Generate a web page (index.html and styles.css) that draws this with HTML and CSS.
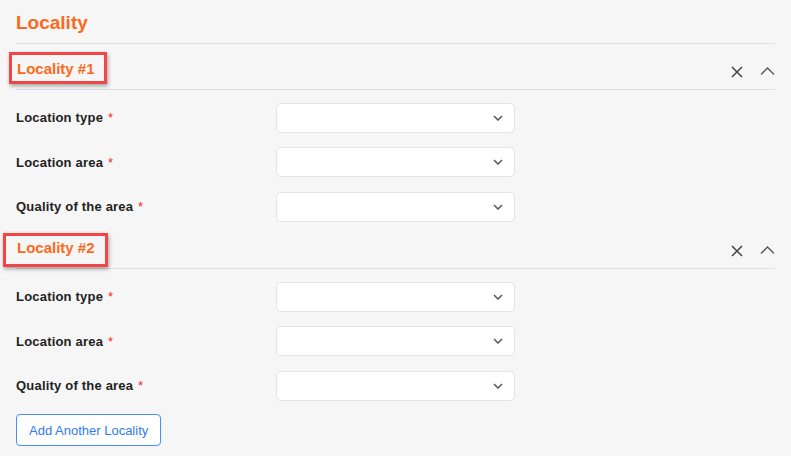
FILE: index.html
```html
<!DOCTYPE html>
<html>
<head>
<meta charset="utf-8">
<link rel="stylesheet" href="styles.css">
</head>
<body>
<div class="page">
  <div class="title">Locality</div>

  <div class="section">
    <div class="section-header">
      <div class="mark mark-1"></div>
      <div class="section-title">Locality #1</div>
      <div class="actions">
        <svg class="icon-x" width="12" height="12" viewBox="0 0 12 12"><path d="M1 1 L11 11 M11 1 L1 11" stroke="#444" stroke-width="1.5" fill="none"/></svg>
        <svg class="icon-up" width="15" height="8" viewBox="0 0 15 8"><path d="M1 7.5 L7.5 1 L14 7.5" stroke="#555" stroke-width="1.3" fill="none"/></svg>
      </div>
    </div>
    <div class="rows">
      <div class="row"><div class="label">Location type <span class="req">*</span></div><div class="select"><svg width="10" height="6" viewBox="0 0 10 6"><path d="M1 1 L5 5 L9 1" stroke="#555" stroke-width="1.5" fill="none"/></svg></div></div>
      <div class="row"><div class="label">Location area <span class="req">*</span></div><div class="select"><svg width="10" height="6" viewBox="0 0 10 6"><path d="M1 1 L5 5 L9 1" stroke="#555" stroke-width="1.5" fill="none"/></svg></div></div>
      <div class="row"><div class="label">Quality of the area <span class="req">*</span></div><div class="select"><svg width="10" height="6" viewBox="0 0 10 6"><path d="M1 1 L5 5 L9 1" stroke="#555" stroke-width="1.5" fill="none"/></svg></div></div>
    </div>
  </div>

  <div class="section">
    <div class="section-header">
      <div class="mark mark-2"></div>
      <div class="section-title">Locality #2</div>
      <div class="actions">
        <svg class="icon-x" width="12" height="12" viewBox="0 0 12 12"><path d="M1 1 L11 11 M11 1 L1 11" stroke="#444" stroke-width="1.5" fill="none"/></svg>
        <svg class="icon-up" width="15" height="8" viewBox="0 0 15 8"><path d="M1 7.5 L7.5 1 L14 7.5" stroke="#555" stroke-width="1.3" fill="none"/></svg>
      </div>
    </div>
    <div class="rows">
      <div class="row"><div class="label">Location type <span class="req">*</span></div><div class="select"><svg width="10" height="6" viewBox="0 0 10 6"><path d="M1 1 L5 5 L9 1" stroke="#555" stroke-width="1.5" fill="none"/></svg></div></div>
      <div class="row"><div class="label">Location area <span class="req">*</span></div><div class="select"><svg width="10" height="6" viewBox="0 0 10 6"><path d="M1 1 L5 5 L9 1" stroke="#555" stroke-width="1.5" fill="none"/></svg></div></div>
      <div class="row"><div class="label">Quality of the area <span class="req">*</span></div><div class="select"><svg width="10" height="6" viewBox="0 0 10 6"><path d="M1 1 L5 5 L9 1" stroke="#555" stroke-width="1.5" fill="none"/></svg></div></div>
    </div>
  </div>

  <button class="add-btn">Add Another Locality</button>
</div>
</body>
</html>
```

FILE: styles.css
```css
html, body {
  margin: 0;
  padding: 0;
  background: #f6f6f6;
  font-family: "Liberation Sans", Arial, sans-serif;
}

.page {
  padding: 0 16px;
  overflow: hidden;
  height: 456px;
  box-sizing: border-box;
}

.title {
  box-sizing: border-box;
  height: 44px;
  padding-top: 12px;
  font-size: 19px;
  line-height: 22px;
  font-weight: bold;
  color: #fa6a1c;
  border-bottom: 1px solid #dcdfe3;
}

.section-header {
  position: relative;
  box-sizing: border-box;
  height: 45.5px;
  padding-top: 16px;
  display: flex;
  align-items: flex-start;
  justify-content: space-between;
  border-bottom: 1px solid #dcdfe3;
}

.section-title {
  font-size: 15px;
  line-height: 18px;
  font-weight: bold;
  color: #fa6a1c;
  padding-left: 1px;
}

.actions {
  display: flex;
  align-items: center;
  gap: 17px;
  height: 18px;
  margin-top: 3px;
}

.icon-x {
  display: block;
}

.icon-up {
  display: block;
  margin-top: -2px;
}

.mark {
  position: absolute;
  border: 3px solid #f24646;
  box-shadow: 1px 2px 4px rgba(0, 0, 0, 0.35);
  box-sizing: border-box;
}

.mark-1 {
  left: -7px;
  top: 8px;
  width: 98px;
  height: 32px;
}

.mark-2 {
  left: -13px;
  top: 10px;
  width: 105px;
  height: 34px;
}

.rows {
  padding-top: 13px;
  padding-bottom: 1.5px;
  display: flex;
  flex-direction: column;
  gap: 14.5px;
}

.row {
  display: flex;
  align-items: center;
  height: 30px;
}

.label {
  width: 260px;
  font-size: 13px;
  font-weight: bold;
  letter-spacing: 0.2px;
  color: #222;
}

.req {
  color: #f22;
  font-weight: normal;
  font-size: 13px;
  margin-left: 1px;
}

.select {
  box-sizing: border-box;
  width: 239px;
  height: 30px;
  background: #fff;
  border: 1px solid #e2e4e6;
  border-radius: 5px;
  display: flex;
  align-items: center;
  justify-content: flex-end;
  padding-right: 11px;
}

.select svg {
  display: block;
}

.add-btn {
  margin-top: 12px;
  height: 32px;
  padding: 0 12px;
  background: #fff;
  border: 1px solid #4a8ff5;
  border-radius: 4px;
  color: #2f7bf0;
  font-family: "Liberation Sans", Arial, sans-serif;
  font-size: 13px;
  cursor: pointer;
}
```
